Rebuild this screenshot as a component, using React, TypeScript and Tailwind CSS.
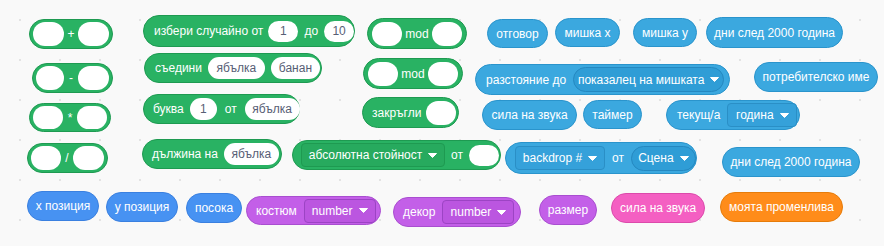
import React from 'react'

const font = { fontFamily: '"Liberation Sans", Arial, sans-serif' }

const green = 'bg-[#29b263] border-[#1e9a51]'
const sensing = 'bg-[#3ba8df] border-[#2a94cc]'
const motion = 'bg-[#4792f2] border-[#3a80e0]'
const looks = 'bg-[#c35fe8] border-[#a94ed0]'
const sound = 'bg-[#f45fc2] border-[#dc4aab]'
const vars = 'bg-[#ff8c1a] border-[#e67c0a]'

function Block({ pos, color, className = '', children }: { pos: string; color: string; className?: string; children: React.ReactNode }) {
  return (
    <div className={`absolute flex items-center rounded-full border text-[12px] text-white whitespace-nowrap ${pos} ${color} ${className}`}>
      {children}
    </div>
  )
}

function Oval({ w, h = 'h-[22px]', children }: { w: string; h?: string; children?: React.ReactNode }) {
  return (
    <div className={`flex items-center justify-center rounded-full bg-white text-[12px] text-[#575e75] shrink-0 ${w} ${h}`}>
      {children}
    </div>
  )
}

function Arrow() {
  return (
    <svg width="9" height="5" viewBox="0 0 9 5" className="ml-[6px] shrink-0">
      <path d="M0.5 0.5h8L4.5 4.5z" fill="#fff" stroke="#fff" strokeLinejoin="round" />
    </svg>
  )
}

function Drop({ w, color, children }: { w: string; color: string; children: React.ReactNode }) {
  return (
    <div className={`flex h-[24px] items-center justify-center rounded-[4px] border shrink-0 ${w} ${color}`}>
      {children}
      <Arrow />
    </div>
  )
}

function DropPill({ w, children }: { w: string; children: React.ReactNode }) {
  return (
    <div className={`flex h-[25px] items-center justify-center rounded-full border border-[#2588c0] bg-[#2f9dd6] shrink-0 ${w}`}>
      {children}
      <Arrow />
    </div>
  )
}

export default function App() {
  return (
    <div
      className="relative h-[246px] w-[884px] overflow-hidden bg-[#f9f9f9] bg-[radial-gradient(#e3e3e3_1px,transparent_1.2px)] bg-[size:40px_40px]"
      style={font}
    >
      {/* arithmetic operators */}
      <Block pos="left-[29px] top-[19px] w-[84px] h-[30px]" color={green} className="justify-between px-[3px]">
        <Oval w="w-[31px]" h="h-[24px]" />
        <span>+</span>
        <Oval w="w-[31px]" h="h-[24px]" />
      </Block>
      <Block pos="left-[32px] top-[63px] w-[81px] h-[30px]" color={green} className="justify-between px-[3px]">
        <Oval w="w-[28px]" h="h-[24px]" />
        <span>-</span>
        <Oval w="w-[31px]" h="h-[24px]" />
      </Block>
      <Block pos="left-[29px] top-[103px] w-[82px] h-[29px]" color={green} className="justify-between px-[3px]">
        <Oval w="w-[30px]" h="h-[23px]" />
        <span>*</span>
        <Oval w="w-[30px]" h="h-[23px]" />
      </Block>
      <Block pos="left-[27px] top-[143px] w-[81px] h-[30px]" color={green} className="justify-between px-[3px]">
        <Oval w="w-[30px]" h="h-[24px]" />
        <span>/</span>
        <Oval w="w-[31px]" h="h-[24px]" />
      </Block>

      {/* string / random */}
      <Block pos="left-[143px] top-[15px] w-[212px] h-[32px]" color={green} className="pl-[10px] gap-[5px]">
        <span>избери случайно от</span>
        <Oval w="w-[30px]" h="h-[21px]">1</Oval>
        <span className="mx-[1px]">до</span>
        <Oval w="w-[30px]" h="h-[21px]">10</Oval>
      </Block>
      <Block pos="left-[144px] top-[53px] w-[178px] h-[30px]" color={green} className="pl-[10px] gap-[6px]">
        <span>съедини</span>
        <Oval w="w-[57px]">ябълка</Oval>
        <Oval w="w-[49px]">банан</Oval>
      </Block>
      <Block pos="left-[143px] top-[94px] w-[157px] h-[30px]" color={green} className="pl-[9px] gap-[6px]">
        <span>буква</span>
        <Oval w="w-[27px]">1</Oval>
        <span className="mx-[2px]">от</span>
        <Oval w="w-[55px]">ябълка</Oval>
      </Block>
      <Block pos="left-[142px] top-[139px] w-[140px] h-[30px]" color={green} className="pl-[9px] gap-[6px]">
        <span>дължина на</span>
        <Oval w="w-[55px]">ябълка</Oval>
      </Block>
      <Block pos="left-[292px] top-[140px] w-[209px] h-[30px]" color={green} className="pl-[8px] gap-[6px]">
        <Drop w="w-[144px]" color="bg-[#27aa5e] border-[#1e9a51]">абсолютна стойност</Drop>
        <span>от</span>
        <Oval w="w-[30px]" h="h-[21px]" />
      </Block>

      {/* mod / round */}
      <Block pos="left-[367px] top-[18px] w-[100px] h-[31px]" color={green} className="justify-between px-[4px]">
        <Oval w="w-[30px]" h="h-[24px]" />
        <span>mod</span>
        <Oval w="w-[30px]" h="h-[24px]" />
      </Block>
      <Block pos="left-[363px] top-[58px] w-[100px] h-[31px]" color={green} className="justify-between px-[4px]">
        <Oval w="w-[30px]" h="h-[24px]" />
        <span>mod</span>
        <Oval w="w-[30px]" h="h-[24px]" />
      </Block>
      <Block pos="left-[362px] top-[97px] w-[97px] h-[31px]" color={green} className="justify-between pl-[9px] pr-[2px]">
        <span>закръгли</span>
        <Oval w="w-[30px]" h="h-[24px]" />
      </Block>

      {/* sensing */}
      <Block pos="left-[487px] top-[19px] w-[61px] h-[29px]" color={sensing} className="justify-center">отговор</Block>
      <Block pos="left-[555px] top-[18px] w-[65px] h-[29px]" color={sensing} className="justify-center">мишка x</Block>
      <Block pos="left-[633px] top-[18px] w-[64px] h-[29px]" color={sensing} className="justify-center">мишка y</Block>
      <Block pos="left-[706px] top-[17px] w-[137px] h-[31px]" color={sensing} className="justify-center">дни след 2000 година</Block>
      <Block pos="left-[475px] top-[64px] w-[255px] h-[31px]" color={sensing} className="pl-[10px] gap-[7px]">
        <span>разстояние до</span>
        <DropPill w="w-[151px]">показалец на мишката</DropPill>
      </Block>
      <Block pos="left-[754px] top-[62px] w-[124px] h-[30px]" color={sensing} className="justify-center">потребителско име</Block>
      <Block pos="left-[482px] top-[100px] w-[95px] h-[30px]" color={sensing} className="justify-center">сила на звука</Block>
      <Block pos="left-[583px] top-[100px] w-[59px] h-[29px]" color={sensing} className="justify-center">таймер</Block>
      <Block pos="left-[666px] top-[100px] w-[134px] h-[30px]" color={sensing} className="pl-[10px] gap-[7px]">
        <span>текущ/а</span>
        <Drop w="w-[70px]" color="bg-[#35a1da] border-[#2a8fc6]">година</Drop>
      </Block>
      <Block pos="left-[505px] top-[142px] w-[192px] h-[32px]" color={sensing} className="pl-[9px] gap-[6px]">
        <Drop w="w-[90px]" color="bg-[#35a1da] border-[#2a8fc6]">backdrop #</Drop>
        <span className="mx-[1px]">от</span>
        <DropPill w="w-[65px]">Сцена</DropPill>
      </Block>
      <Block pos="left-[722px] top-[147px] w-[138px] h-[30px]" color={sensing} className="justify-center">дни след 2000 година</Block>

      {/* bottom row */}
      <Block pos="left-[27px] top-[191px] w-[72px] h-[30px]" color={motion} className="justify-center">x позиция</Block>
      <Block pos="left-[106px] top-[192px] w-[72px] h-[30px]" color={motion} className="justify-center">y позиция</Block>
      <Block pos="left-[186px] top-[193px] w-[56px] h-[30px]" color={motion} className="justify-center">посока</Block>
      <Block pos="left-[246px] top-[196px] w-[135px] h-[29px]" color={looks} className="pl-[9px] gap-[7px]">
        <span>костюм</span>
        <Drop w="w-[72px]" color="bg-[#bb56e0] border-[#9c44c4]">number</Drop>
      </Block>
      <Block pos="left-[393px] top-[197px] w-[128px] h-[30px]" color={looks} className="pl-[9px] gap-[7px]">
        <span>декор</span>
        <Drop w="w-[72px]" color="bg-[#bb56e0] border-[#9c44c4]">number</Drop>
      </Block>
      <Block pos="left-[539px] top-[195px] w-[58px] h-[30px]" color={looks} className="justify-center">размер</Block>
      <Block pos="left-[611px] top-[193px] w-[94px] h-[30px]" color={sound} className="justify-center">сила на звука</Block>
      <Block pos="left-[720px] top-[192px] w-[123px] h-[30px]" color={vars} className="justify-center">моята променлива</Block>
    </div>
  )
}
